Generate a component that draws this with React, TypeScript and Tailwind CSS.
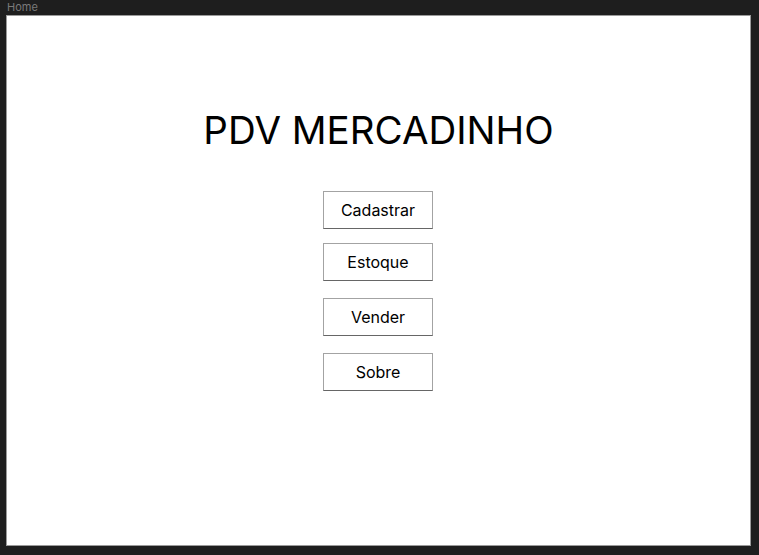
import React from 'react';

const MenuButton: React.FC<{ label: string; className?: string }> = ({ label, className = '' }) => (
  <button
    className={`w-[110px] h-[38px] bg-white border border-[#a3a3a3] border-b-[#666] text-[16px] text-black ${className}`}
  >
    {label}
  </button>
);

const App: React.FC = () => {
  return (
    <div className="w-[759px] h-[555px] bg-[#1e1e1e] overflow-hidden" style={{ fontFamily: 'Inter, "Noto Sans", sans-serif' }}>
      <div className="h-[15px] pl-[7px] text-[11px] leading-[15px] text-[#7a7a7a]">Home</div>
      <div className="ml-[6px] w-[745px] h-[531px] border border-[#9a9a9a] bg-white flex flex-col items-center pt-[91px]">
        <h1 className="text-[38.5px] leading-[46px] font-normal text-black">PDV MERCADINHO</h1>
        <div className="flex flex-col items-center mt-[38px] mr-[1px]">
          <MenuButton label="Cadastrar" />
          <MenuButton label="Estoque" className="mt-[14px]" />
          <MenuButton label="Vender" className="mt-[17px]" />
          <MenuButton label="Sobre" className="mt-[17px]" />
        </div>
      </div>
    </div>
  );
};

export default App;
